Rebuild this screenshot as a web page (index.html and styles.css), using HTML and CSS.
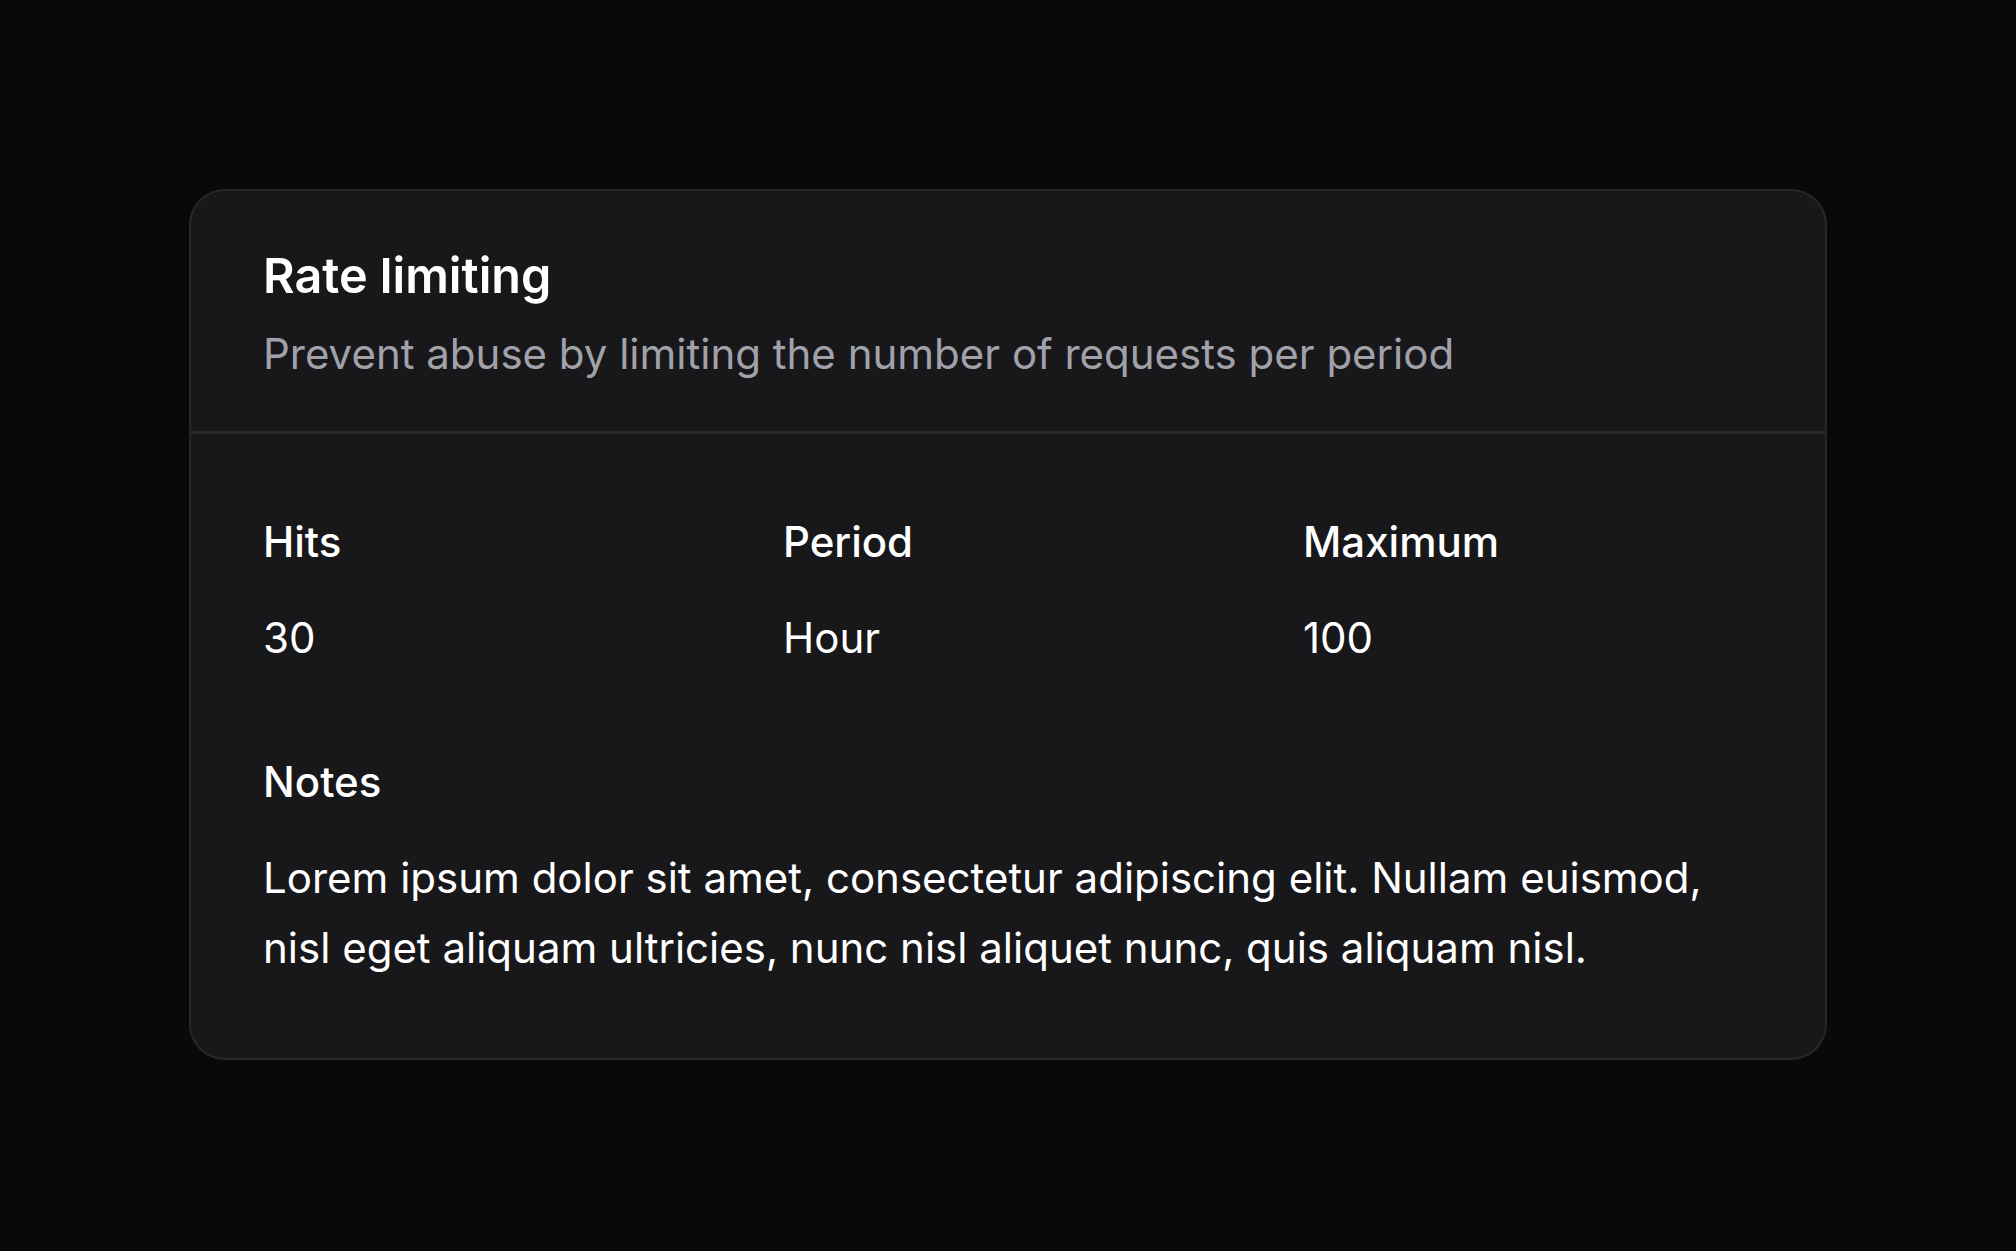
FILE: index.html
```html
<!DOCTYPE html>
<html lang="en">
<head>
<meta charset="utf-8">
<title>Rate limiting</title>
<link rel="stylesheet" href="styles.css">
</head>
<body>
  <main class="page">
    <section class="card">
      <header class="card-header">
        <h1 class="card-title">Rate limiting</h1>
        <p class="card-subtitle">Prevent abuse by limiting the number of requests per period</p>
      </header>
      <div class="card-body">
        <dl class="stats">
          <div class="stat">
            <dt class="stat-label">Hits</dt>
            <dd class="stat-value">30</dd>
          </div>
          <div class="stat">
            <dt class="stat-label">Period</dt>
            <dd class="stat-value">Hour</dd>
          </div>
          <div class="stat">
            <dt class="stat-label">Maximum</dt>
            <dd class="stat-value">100</dd>
          </div>
        </dl>
        <div class="notes">
          <h2 class="notes-label">Notes</h2>
          <p class="notes-text">Lorem ipsum dolor sit amet, consectetur adipiscing elit. Nullam euismod, nisl eget aliquam ultricies, nunc nisl aliquet nunc, quis aliquam nisl.</p>
        </div>
      </div>
    </section>
  </main>
</body>
</html>
```

FILE: styles.css
```css
* {
  box-sizing: border-box;
}

html, body {
  margin: 0;
  padding: 0;
  height: 100%;
}

body {
  background: #09090b;
  color: #fafafa;
  font-family: Inter, "Noto Sans", "Liberation Sans", sans-serif;
}

.page {
  min-height: 100%;
  padding-bottom: 3px;
  display: flex;
  align-items: center;
  justify-content: center;
}

.card {
  width: 1638px;
  background: #18181b;
  border: 2px solid #27272a;
  border-radius: 36px;
  overflow: hidden;
}

.card-header {
  padding: 56px 72px 49px;
  border-bottom: 3px solid #2a2a2e;
}

.card-title {
  margin: 0;
  font-size: 48.5px;
  line-height: 58px;
  font-weight: 600;
  color: #ffffff;
}

.card-subtitle {
  margin: 21px 0 0;
  font-size: 42px;
  line-height: 56px;
  font-weight: 400;
  color: #a1a1aa;
}

.card-body {
  padding: 82px 72px 75px;
}

.stats {
  margin: 0;
  display: grid;
  grid-template-columns: repeat(3, 1fr);
  column-gap: 70px;
}

.stat {
  display: flex;
  flex-direction: column;
  gap: 44px;
}

.stat-label {
  font-size: 42px;
  line-height: 52px;
  font-weight: 500;
  color: #ffffff;
}

.stat-value {
  margin: 0;
  font-size: 42px;
  line-height: 52px;
  font-weight: 400;
  color: #ffffff;
}

.notes {
  margin-top: 92px;
}

.notes-label {
  margin: 0;
  font-size: 42px;
  line-height: 52px;
  font-weight: 500;
  color: #ffffff;
}

.notes-text {
  margin: 35px 0 0;
  font-size: 42px;
  line-height: 70px;
  font-weight: 400;
  color: #ffffff;
}
```
